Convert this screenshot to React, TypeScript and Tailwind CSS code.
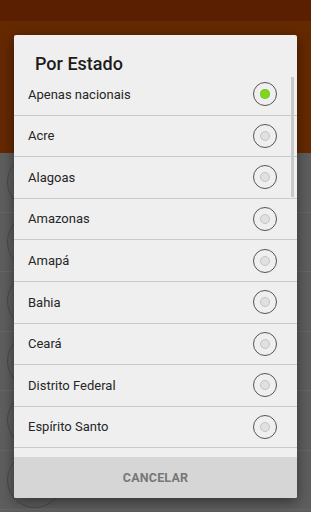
const estados = [
  "Apenas nacionais",
  "Acre",
  "Alagoas",
  "Amazonas",
  "Amapá",
  "Bahia",
  "Ceará",
  "Distrito Federal",
  "Espírito Santo",
  "Goiás",
];

const Radio = ({ checked }: { checked: boolean }) => (
  <div className="flex h-[24px] w-[24px] items-center justify-center rounded-full border border-[#555]">
    {checked ? (
      <div className="h-[10px] w-[10px] rounded-full bg-[#7fd61f] shadow-[inset_0_0_1px_rgba(0,0,0,0.3)]" />
    ) : (
      <div className="h-[10px] w-[10px] rounded-full border border-[#c4c4c4] bg-[#e0e0e0]" />
    )}
  </div>
);

export default function App() {
  return (
    <div
      className="relative h-[512px] w-[311px] overflow-hidden bg-[#5e5e5e]"
      style={{ fontFamily: "Roboto, 'Liberation Sans', sans-serif" }}
    >
      {/* dimmed screen behind the dialog */}
      <div className="h-[21px] bg-[#5a1f00]" />
      <div className="h-[132px] bg-[#652900]" />
      <div className="flex flex-col">
        {[0, 1, 2, 3, 4, 5].map((i) => (
          <div key={i} className="flex h-[59.5px] items-center border-b border-[#676767] pl-[7px]">
            <div className="h-[56px] w-[56px] rounded-full border border-[#4a4a4a]" />
          </div>
        ))}
      </div>

      {/* dialog */}
      <div className="absolute left-[14px] top-[35px] flex h-[463px] w-[283px] flex-col overflow-hidden rounded-[2px] bg-[#efefef] shadow-[0_4px_14px_rgba(0,0,0,0.45)]">
        <div className="h-[39px] shrink-0 pl-[21px] pt-[17px] text-[18px] font-medium leading-[24px] text-[#1c1c1c]">
          Por Estado
        </div>
        <div className="relative min-h-0 flex-1 overflow-hidden">
          {estados.map((nome, i) => (
            <div
              key={nome}
              className="flex h-[41.6px] items-center justify-between border-b border-[#c9c9c9] pl-[14px] pr-[20px]"
            >
              <span className="text-[13px] text-[#262626]">{nome}</span>
              <Radio checked={i === 0} />
            </div>
          ))}
          <div className="absolute right-[3px] top-[3px] h-[120px] w-[3px] bg-[#c9c9c9]" />
        </div>
        <div className="flex h-[41px] shrink-0 items-center justify-center bg-[#d6d6d6] pt-[2px] text-[12.5px] font-bold tracking-[0.2px] text-[#777]">
          CANCELAR
        </div>
      </div>
    </div>
  );
}
